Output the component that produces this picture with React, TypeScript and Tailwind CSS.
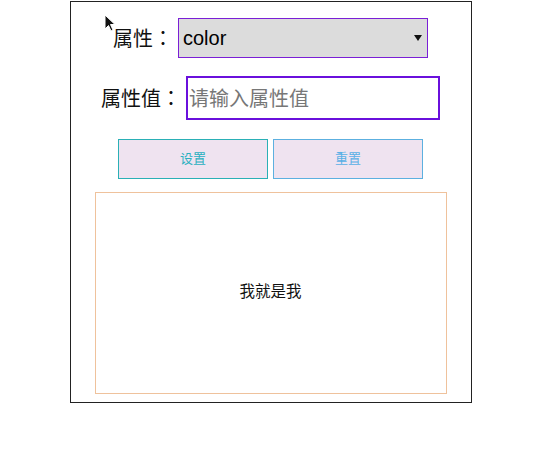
import React from "react";

export default function App() {
  const cjk = { fontFamily: '"Liberation Sans", "Noto Sans CJK SC", sans-serif' };
  const cjkFirst = { fontFamily: '"Noto Sans CJK SC", sans-serif' };
  const colon = { fontFamily: '"Noto Sans CJK JP", sans-serif' };
  return (
    <div className="relative w-[548px] h-[472px] bg-white" style={cjk}>
      <div className="mt-px ml-[70px] w-[402px] h-[402px] border border-[#222] flex flex-col items-center pr-px">
        <div className="mt-[16px] flex items-center gap-[5px]">
          <span className="text-[20px] leading-none text-[#111] w-[60px] whitespace-nowrap" style={cjkFirst}>
            属性<span style={colon}>：</span>
          </span>
          <div className="w-[250px] h-[40px] border border-[#7a1fd6] bg-[#dcdcdc] flex items-center justify-between pl-[4px] pr-[5px]">
            <span className="text-[20px] text-black">color</span>
            <svg width="8" height="6" viewBox="0 0 8 6"><path d="M0 0 L8 0 L4 6 Z" fill="#111" /></svg>
          </div>
        </div>
        <div className="mt-[18px] flex items-center gap-[5px]">
          <span className="text-[20px] leading-none text-[#111] w-[80px] whitespace-nowrap" style={cjkFirst}>
            属性值<span style={colon}>：</span>
          </span>
          <div className="w-[254px] h-[44px] border-2 border-[#6a10dc] bg-white flex items-center pl-[1px]">
            <span className="text-[20px] text-[#777]" style={cjkFirst}>请输入属性值</span>
          </div>
        </div>
        <div className="mt-[19px] flex gap-[5px]">
          <div className="w-[150px] h-[40px] border border-[#2ab0b6] bg-[#efe3f0] flex items-center justify-center text-[13px] text-[#2ab0c0]">设置</div>
          <div className="w-[150px] h-[40px] border border-[#5cb0e0] bg-[#efe3f0] flex items-center justify-center text-[13px] text-[#5ab0e6]">重置</div>
        </div>
        <div className="mt-[13px] w-[352px] h-[202px] border border-[#efc29c] flex items-center justify-center">
          <span className="text-[15.5px] text-[#111] -mt-[2px]">我就是我</span>
        </div>
      </div>
      <svg className="absolute left-[104px] top-[13px]" width="14" height="20" viewBox="0 0 14 20">
        <path d="M1 1 L1 15 L4.5 11.5 L7 17 L9 16 L6.5 10.5 L11 10.5 Z" fill="#111" stroke="#fff" strokeWidth="1" />
      </svg>
    </div>
  );
}
